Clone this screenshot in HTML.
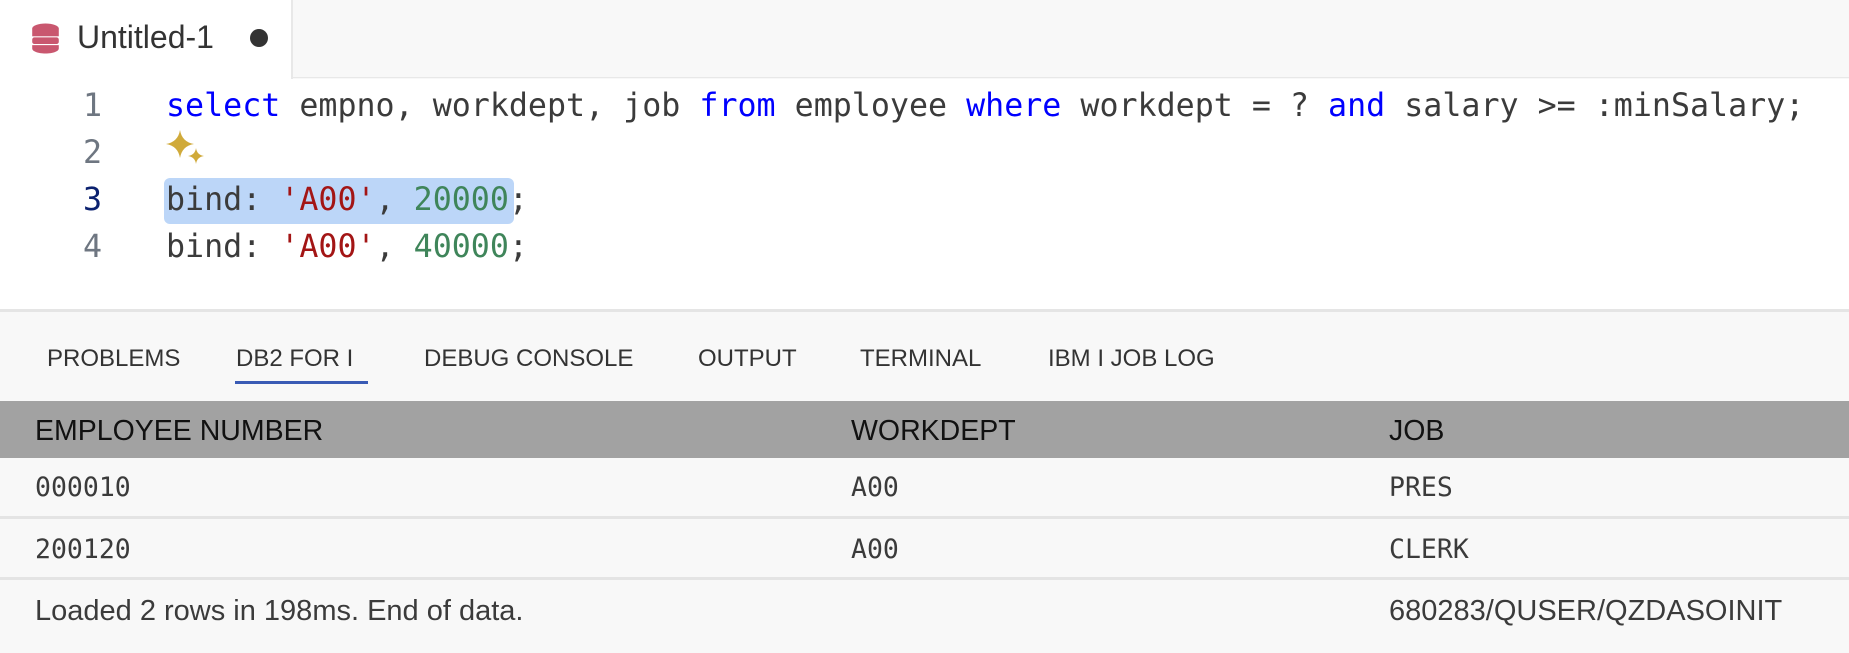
<!DOCTYPE html>
<html><head><meta charset="utf-8"><style>
*{margin:0;padding:0;box-sizing:border-box}
body{width:1849px;height:653px;overflow:hidden;background:#f8f8f8;position:relative;font-family:"Liberation Sans",sans-serif}
.abs{position:absolute;white-space:pre}
#tabbar{position:absolute;left:0;top:0;width:1849px;height:78px;background:#f8f8f8;border-bottom:1px solid #e8e8e8}
#tab{position:absolute;left:0;top:0;width:293px;height:79px;background:#fff;border-right:2px solid #e8e8e8}
#editor{position:absolute;left:0;top:79px;width:1849px;height:233px;background:#fff;border-bottom:3px solid #e5e5e5}
.code{font-family:"DejaVu Sans Mono","Liberation Mono",monospace;font-size:31.65px;line-height:47px;color:#3b3b3b}
.ln{color:#6e7681;left:66px;width:36px;text-align:right}
.k{color:#0000ff}.s{color:#a31515}.n{color:#3f855a}
.ptab{font-size:24px;color:#333;top:345px}
.hdr{position:absolute;left:0;top:401px;width:1849px;height:57px;background:#a2a2a2}
.h{font-size:28.5px;color:#111;top:415px}
.row{position:absolute;left:0;width:1849px;border-bottom:3px solid #e4e4e4}
.m{font-family:"DejaVu Sans Mono",monospace;font-size:26.5px;color:#3b3b3b}
.f{font-size:29px;color:#3b3b3b;top:595px}
</style></head><body>
<div id="tabbar"></div>
<div id="tab">
<svg class="abs" style="left:31px;top:23px" width="29" height="31" viewBox="0 0 26 28">
<ellipse cx="13" cy="5" rx="12" ry="4.5" fill="#c9576f"/>
<rect x="1" y="5" width="24" height="7" fill="#c9576f"/>
<rect x="1" y="13" width="24" height="6" rx="2" fill="#c9576f"/>
<path d="M1 20h24v3c0 2.5-5 4.5-12 4.5S1 25.5 1 23z" fill="#c9576f"/>
</svg>
<div class="abs" style="left:77px;top:19px;font-size:32px;color:#333">Untitled-1</div>
<div class="abs" style="left:250px;top:29px;width:18px;height:18px;border-radius:50%;background:#333"></div>
</div>
<div id="editor"></div>
<div class="abs" style="left:164px;top:178px;width:350px;height:46px;background:#bcd6f8;border-radius:6px"></div>
<div class="abs code ln" style="top:83px">1</div>
<div class="abs code ln" style="top:130px">2</div>
<div class="abs code ln" style="top:177px;color:#0b216f">3</div>
<div class="abs code ln" style="top:224px">4</div>
<div class="abs code" style="left:166px;top:83px"><span class="k">select</span> empno, workdept, job <span class="k">from</span> employee <span class="k">where</span> workdept = ? <span class="k">and</span> salary &gt;= :minSalary;</div>
<svg class="abs" style="left:166px;top:130px" width="40" height="38" viewBox="0 0 40 38">
<path d="M14 0 Q16 12 28 14 Q16 16 14 28 Q12 16 0 14 Q12 12 14 0Z" fill="#d0aa3a"/>
<path d="M30 18 Q31 25 38 26 Q31 27 30 34 Q29 27 22 26 Q29 25 30 18Z" fill="#d0aa3a"/>
</svg>
<div class="abs code" style="left:166px;top:177px">bind: <span class="s">'A00'</span>, <span class="n">20000</span>;</div>
<div class="abs code" style="left:166px;top:224px">bind: <span class="s">'A00'</span>, <span class="n">40000</span>;</div>

<div class="abs ptab" style="left:47px">PROBLEMS</div>
<div class="abs ptab" style="left:236px">DB2 FOR I</div>
<div class="abs" style="left:235px;top:381px;width:133px;height:3px;background:#3a5bb5"></div>
<div class="abs ptab" style="left:424px">DEBUG CONSOLE</div>
<div class="abs ptab" style="left:698px">OUTPUT</div>
<div class="abs ptab" style="left:860px">TERMINAL</div>
<div class="abs ptab" style="left:1048px">IBM I JOB LOG</div>

<div class="hdr"></div>
<div class="abs h" style="left:35px">EMPLOYEE NUMBER</div>
<div class="abs h" style="left:851px">WORKDEPT</div>
<div class="abs h" style="left:1389px">JOB</div>
<div class="row" style="top:458px;height:61px"></div>
<div class="row" style="top:519px;height:61px"></div>
<div class="abs m" style="left:35px;top:472px">000010</div>
<div class="abs m" style="left:851px;top:472px">A00</div>
<div class="abs m" style="left:1389px;top:472px">PRES</div>
<div class="abs m" style="left:35px;top:534px">200120</div>
<div class="abs m" style="left:851px;top:534px">A00</div>
<div class="abs m" style="left:1389px;top:534px">CLERK</div>
<div class="abs f" style="left:35px">Loaded 2 rows in 198ms. End of data.</div>
<div class="abs f" style="left:1389px">680283/QUSER/QZDASOINIT</div>
</body></html>
